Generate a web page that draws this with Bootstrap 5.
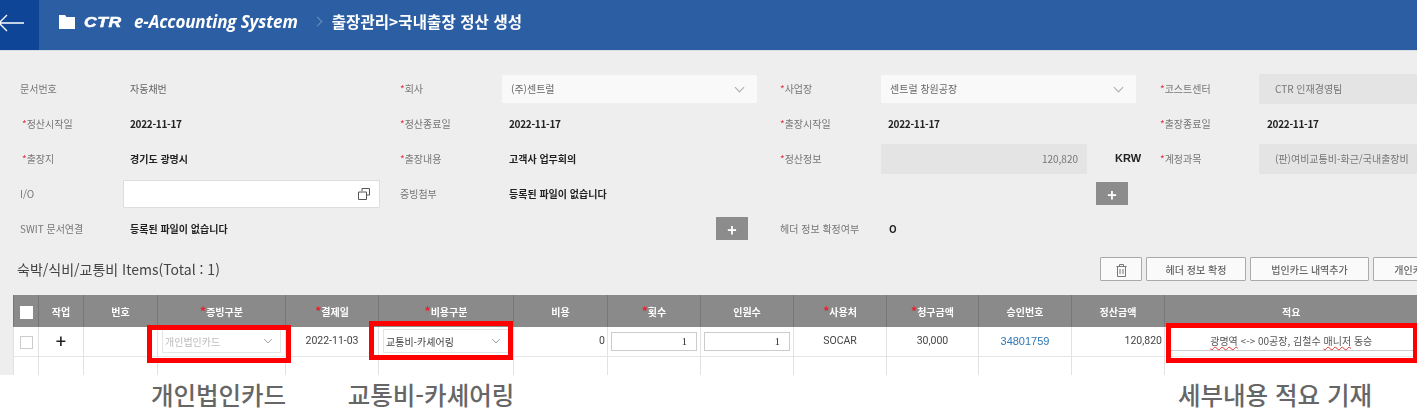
<!DOCTYPE html>
<html lang="ko">
<head>
    <meta charset="UTF-8">
    <meta name="viewport" content="width=device-width, initial-scale=1.0">
    <title>국내출장 정산 생성</title>
    <link href="https://cdn.jsdelivr.net/npm/bootstrap@5.3.0/dist/css/bootstrap.min.css" rel="stylesheet">
    <style>
        html, body { height: 420px; overflow: hidden; background: #fff; }
        body { font-family: "Noto Sans CJK KR", "Liberation Sans", sans-serif; font-size: 10px; color: #222; }
        .app-shot { width: 1417px; height: 375px; overflow: hidden; background: #eee; filter: blur(.6px); }

        .top-bar { height: 51px; background: #2b5ea3; color: #fff; border-bottom: 1px solid #d8dde5; }
        .back-box { width: 39px; background: #0f4596; padding-bottom: 5px; }
        .title-box { padding-bottom: 7px; }
        .logo-ctr { font: italic 700 14px "Liberation Sans", sans-serif; -webkit-text-stroke: .5px #fff; letter-spacing: .5px; width: 40px; margin-left: 9px; display: inline-block; transform: scaleX(1.25); transform-origin: left center; }
        .sys-name { font: italic 700 17px "Open Sans", "Liberation Sans", sans-serif; margin-left: 10px; letter-spacing: -.13px; }
        .crumb-sep { width: 7px; height: 7px; border-top: 1px solid #6f90bd; border-right: 1px solid #6f90bd; transform: rotate(45deg); margin: 0 11px 0 16px; }
        .crumb { font-size: 15.5px; font-weight: 700; letter-spacing: .1px; }

        .head-form { display: grid; grid-template-columns: 103px 277px 102px 278px 101px 279px 99px 158px; grid-auto-rows: 35px; padding: 20px 0 0 20px; align-items: center; }
        .lbl { color: #777; white-space: nowrap; }
        .lbl-in { padding-left: 2px; }
        .star { color: #e0313a; }
        .val { font-weight: 700; padding-left: 7px; white-space: nowrap; }
        .val-date { letter-spacing: -.3px; }
        .val-plain { font-weight: 400; color: #666; }
        .field { height: 28px; background: #f9f9f9; color: #666; display: flex; align-items: center; padding: 0 9px; border-radius: 1px; }
        .w-255 { width: 255px; }
        .w-257 { width: 257px; }
        .sel-field { justify-content: space-between; }
        .chev { width: 7px; height: 7px; border-right: 1px solid #aaa; border-bottom: 1px solid #aaa; transform: rotate(45deg); margin: -3px 5px 0 0; }
        .io-field { background: #fff; border: 1px solid #ddd; justify-content: flex-end; }
        .ro-field { background: #e4e4e4; color: #777; height: 30px; }
        .cost-box { width: 206px; justify-content: flex-end; }
        .krw { font-weight: 700; font-family: "Liberation Sans", sans-serif; font-size: 11px; margin-left: 28px; }
        .add-btn { width: 32px; height: 23px; background: #8c8c8c; color: #fff; border: 0; border-radius: 0; font-size: 16px; font-weight: 700; line-height: 22px; padding: 0; }

        .items-title { font-size: 14px; color: #444; padding-left: 17px; }
        .items-bar { margin-top: 11px; margin-bottom: 14px; height: 24px; }
        .tool-btn { height: 24px; background: #fafafa; border: 1px solid #aaa; border-radius: 1px; color: #666; font-size: 10px; font-weight: 500; padding: 0; flex: none; }
        .tb-trash { width: 42px; }
        .tb-head { width: 100px; }
        .tb-corp { width: 119px; }
        .tb-own { width: 119px; margin-right: -75px; }

        .tbl-wrap { margin-left: 13px; }
        .exp-table { table-layout: fixed; width: 1404px; margin: 0; background: #fff; font-size: 10px; border-collapse: collapse; }
        .exp-table th { background: #8a8a8a; color: #fff; height: 32px; padding: 0; text-align: center; vertical-align: middle; font-weight: 700; border: 0; border-left: 1px solid #777; box-shadow: none; }
        .exp-table th .star { font-size: 12px; color: #e8202a; }
        .exp-table td { height: 29px; padding: 0; vertical-align: middle; text-align: center; border: 0; border-left: 1px solid #e2e2e2; border-bottom: 1px solid #e6e6e6; color: #444; position: relative; }
        .exp-table tr.blank-row td { height: 19px; border-bottom: 0; }
        .hd-check { width: 13px; height: 13px; background: #fff; display: inline-block; vertical-align: middle; }
        .row-check { width: 13px; height: 13px; background: #fff; border: 1px solid #ccc; display: inline-block; vertical-align: middle; }
        .row-plus { font-size: 18px; font-weight: 500; color: #222; line-height: 1; }
        .cell-select { height: 24px; min-height: 0; font-size: 10px; padding: 0 20px 0 2px; border: 1px solid #e4e4e4; border-radius: 0; color: #444; width: calc(100% - 8px); margin: 0 4px;
            --bs-form-select-bg-img: url("data:image/svg+xml,%3csvg xmlns='http://www.w3.org/2000/svg' viewBox='0 0 16 16'%3e%3cpath fill='none' stroke='%23777' stroke-width='1.2' d='M2 5l6 6 6-6'/%3e%3c/svg%3e"); background-size: 12px 10px; background-position: right 6px center; }
        .cell-select:disabled { background-color: #fff; color: #bbb; }
        .cell-num { height: 19px; min-height: 0; width: calc(100% - 6px); margin: 0 3px; padding: 0 9px; font: 10.5px "Liberation Serif", serif; text-align: right; border: 1px solid #ccc; border-radius: 0; color: #333; }
        .num-cell { font-family: "Roboto", "Liberation Sans", sans-serif; font-size: 10.5px; }
        .exp-table td.txt-end { text-align: right; padding-right: 2px; }
        .link-no { color: #2f77b5; font-size: 11px; font-family: "Liberation Sans", sans-serif; text-decoration: none; }
        .memo-box { margin: 0 5px; height: 19px; line-height: 18px; border-bottom: 1px solid #ccc; color: #555; font-size: 10px; }
        .spell { text-decoration: underline wavy #d33; text-decoration-thickness: 1px; }
        .red-mark { position: absolute; border: 5px solid #f00; pointer-events: none; }
        .mark-a { left: -11px; right: -6px; top: -2px; bottom: -7px; }
        .mark-b { left: -10px; right: 0; top: -6px; bottom: -4px; }
        .mark-c { left: 1px; right: 0; top: -4px; bottom: -7px; }

        .note-row { display: grid; grid-template-columns: 146px 145px 55px 170px 617px 284px; height: 45px; }
        .note-txt { font-size: 24.5px; font-weight: 500; color: #666; line-height: 39px; text-align: center; white-space: nowrap; }
    </style>
</head>
<body>
    <div class="app-shot">
        <!-- 상단 타이틀 -->
        <div class="top-bar d-flex align-items-stretch">
            <div class="back-box d-flex align-items-center flex-shrink-0">
                <svg width="25" height="24" viewBox="0 0 25 24"><path d="M0 12h24M7 4l-8 8 8 8" fill="none" stroke="#fff" stroke-width="1.3"/></svg>
            </div>
            <div class="title-box d-flex align-items-center ps-3 ms-1">
                <svg width="16" height="14" viewBox="0 0 16 14"><path d="M0 0h6l1.500 2H16v12H0z" fill="#fff"/></svg>
                <span class="logo-ctr">CTR</span>
                <span class="sys-name">e-Accounting System</span>
                <span class="crumb-sep"></span>
                <span class="crumb">출장관리&gt;국내출장 정산 생성</span>
            </div>
        </div>

        <!-- 헤더 정보 -->
        <div class="head-form">
            <div class="lbl">문서번호</div><div class="val val-plain">자동채번</div>
            <div class="lbl"><span class="star">*</span>회사</div>
            <div class="field sel-field w-255"><span>(주)센트럴</span><span class="chev"></span></div>
            <div class="lbl"><span class="star">*</span>사업장</div>
            <div class="field sel-field w-255"><span>센트럴 창원공장</span><span class="chev"></span></div>
            <div class="lbl"><span class="star">*</span>코스트센터</div>
            <div class="field ro-field ps-3">CTR 인재경영팀</div>

            <div class="lbl lbl-in"><span class="star">*</span>정산시작일</div><div class="val val-date">2022-11-17</div>
            <div class="lbl"><span class="star">*</span>정산종료일</div><div class="val val-date">2022-11-17</div>
            <div class="lbl"><span class="star">*</span>출장시작일</div><div class="val val-date">2022-11-17</div>
            <div class="lbl"><span class="star">*</span>출장종료일</div><div class="val val-date ps-2">2022-11-17</div>

            <div class="lbl lbl-in"><span class="star">*</span>출장지</div><div class="val">경기도 광명시</div>
            <div class="lbl"><span class="star">*</span>출장내용</div><div class="val">고객사 업무회의</div>
            <div class="lbl"><span class="star">*</span>정산정보</div>
            <div class="d-flex align-items-center">
                <div class="field ro-field cost-box">120,820</div>
                <span class="krw">KRW</span>
            </div>
            <div class="lbl"><span class="star">*</span>계정과목</div>
            <div class="field ro-field ps-3 text-nowrap overflow-hidden">(판)여비교통비-화근/국내출장비</div>

            <div class="lbl">I/O</div>
            <div class="field io-field w-257">
                <svg width="12" height="12" viewBox="0 0 12 12" fill="none" stroke="#555"><path d="M4 3V.5h7.500V7H8.500"/><path d="M.5 4h8v7.500h-8z"/></svg>
            </div>
            <div class="lbl">증빙첨부</div><div class="val">등록된 파일이 없습니다</div>
            <div></div>
            <div class="d-flex justify-content-end"><button class="add-btn btn" type="button">+</button><span class="ps-4 ms-2"></span></div>
            <div></div><div></div>

            <div class="lbl">SWIT 문서연결</div><div class="val">등록된 파일이 없습니다</div>
            <div></div>
            <div class="d-flex justify-content-end"><button class="add-btn btn" type="button">+</button><span class="ps-4 ms-2"></span></div>
            <div class="lbl">헤더 정보 확정여부</div><div class="val ps-2">O</div>
            <div></div><div></div>
        </div>

        <!-- 항목 버튼 -->
        <div class="items-bar d-flex align-items-center">
            <div class="items-title">숙박/식비/교통비 Items(Total : 1)</div>
            <div class="d-flex gap-1 ms-auto text-nowrap">
                <button class="tool-btn tb-trash" type="button">
                    <svg width="11" height="13" viewBox="0 0 11 13" fill="none" stroke="#777"><path d="M.5 2.500h10M3.500 2.500V.5h4v2M1.500 2.500v10h8v-10M4 5v5M7 5v5"/></svg>
                </button>
                <button class="tool-btn tb-head" type="button">헤더 정보 확정</button>
                <button class="tool-btn tb-corp" type="button">법인카드 내역추가</button>
                <button class="tool-btn tb-own" type="button">개인카드 내역추가</button>
            </div>
        </div>

        <!-- 항목 테이블 -->
        <div class="tbl-wrap">
            <table class="table exp-table">
                <colgroup>
                    <col style="width:25px"><col style="width:45px"><col style="width:74px"><col style="width:128px">
                    <col style="width:93px"><col style="width:135px"><col style="width:94px"><col style="width:93px">
                    <col style="width:93px"><col style="width:93px"><col style="width:92px"><col style="width:93px">
                    <col style="width:93px"><col style="width:253px">
                </colgroup>
                <thead>
                    <tr>
                        <th><span class="hd-check"></span></th>
                        <th>작업</th>
                        <th>번호</th>
                        <th><span class="star">*</span>증빙구분</th>
                        <th><span class="star">*</span>결제일</th>
                        <th><span class="star">*</span>비용구분</th>
                        <th>비용</th>
                        <th><span class="star">*</span>횟수</th>
                        <th>인원수</th>
                        <th><span class="star">*</span>사용처</th>
                        <th><span class="star">*</span>청구금액</th>
                        <th>승인번호</th>
                        <th>정산금액</th>
                        <th>적요</th>
                    </tr>
                </thead>
                <tbody>
                    <tr>
                        <td><span class="row-check"></span></td>
                        <td><span class="row-plus">+</span></td>
                        <td></td>
                        <td>
                            <select class="form-select cell-select" disabled><option>개인법인카드</option></select>
                            <span class="red-mark mark-a"></span>
                        </td>
                        <td class="num-cell">2022-11-03</td>
                        <td>
                            <select class="form-select cell-select"><option>교통비-카셰어링</option></select>
                            <span class="red-mark mark-b"></span>
                        </td>
                        <td class="num-cell txt-end">0</td>
                        <td><input class="form-control cell-num" type="text" value="1"></td>
                        <td><input class="form-control cell-num" type="text" value="1"></td>
                        <td class="num-cell">SOCAR</td>
                        <td class="num-cell">30,000</td>
                        <td><a class="link-no" href="#">34801759</a></td>
                        <td class="num-cell txt-end">120,820</td>
                        <td>
                            <div class="memo-box"><span class="spell">광명역</span> &lt;-&gt; 00공장, 김철수 <span class="spell">매니저</span> 동승</div>
                            <span class="red-mark mark-c"></span>
                        </td>
                    </tr>
                    <tr class="blank-row">
                        <td></td><td></td><td></td><td></td><td></td><td></td><td></td>
                        <td></td><td></td><td></td><td></td><td></td><td></td><td></td>
                    </tr>
                </tbody>
            </table>
        </div>
    </div>

    <!-- 설명 문구 -->
    <div class="note-row">
        <div></div>
        <div class="note-txt">개인법인카드</div>
        <div></div>
        <div class="note-txt">교통비-카셰어링</div>
        <div></div>
        <div class="note-txt">세부내용 적요 기재</div>
    </div>

    <script src="https://cdn.jsdelivr.net/npm/bootstrap@5.3.0/dist/js/bootstrap.bundle.min.js"></script>
</body>
</html>
